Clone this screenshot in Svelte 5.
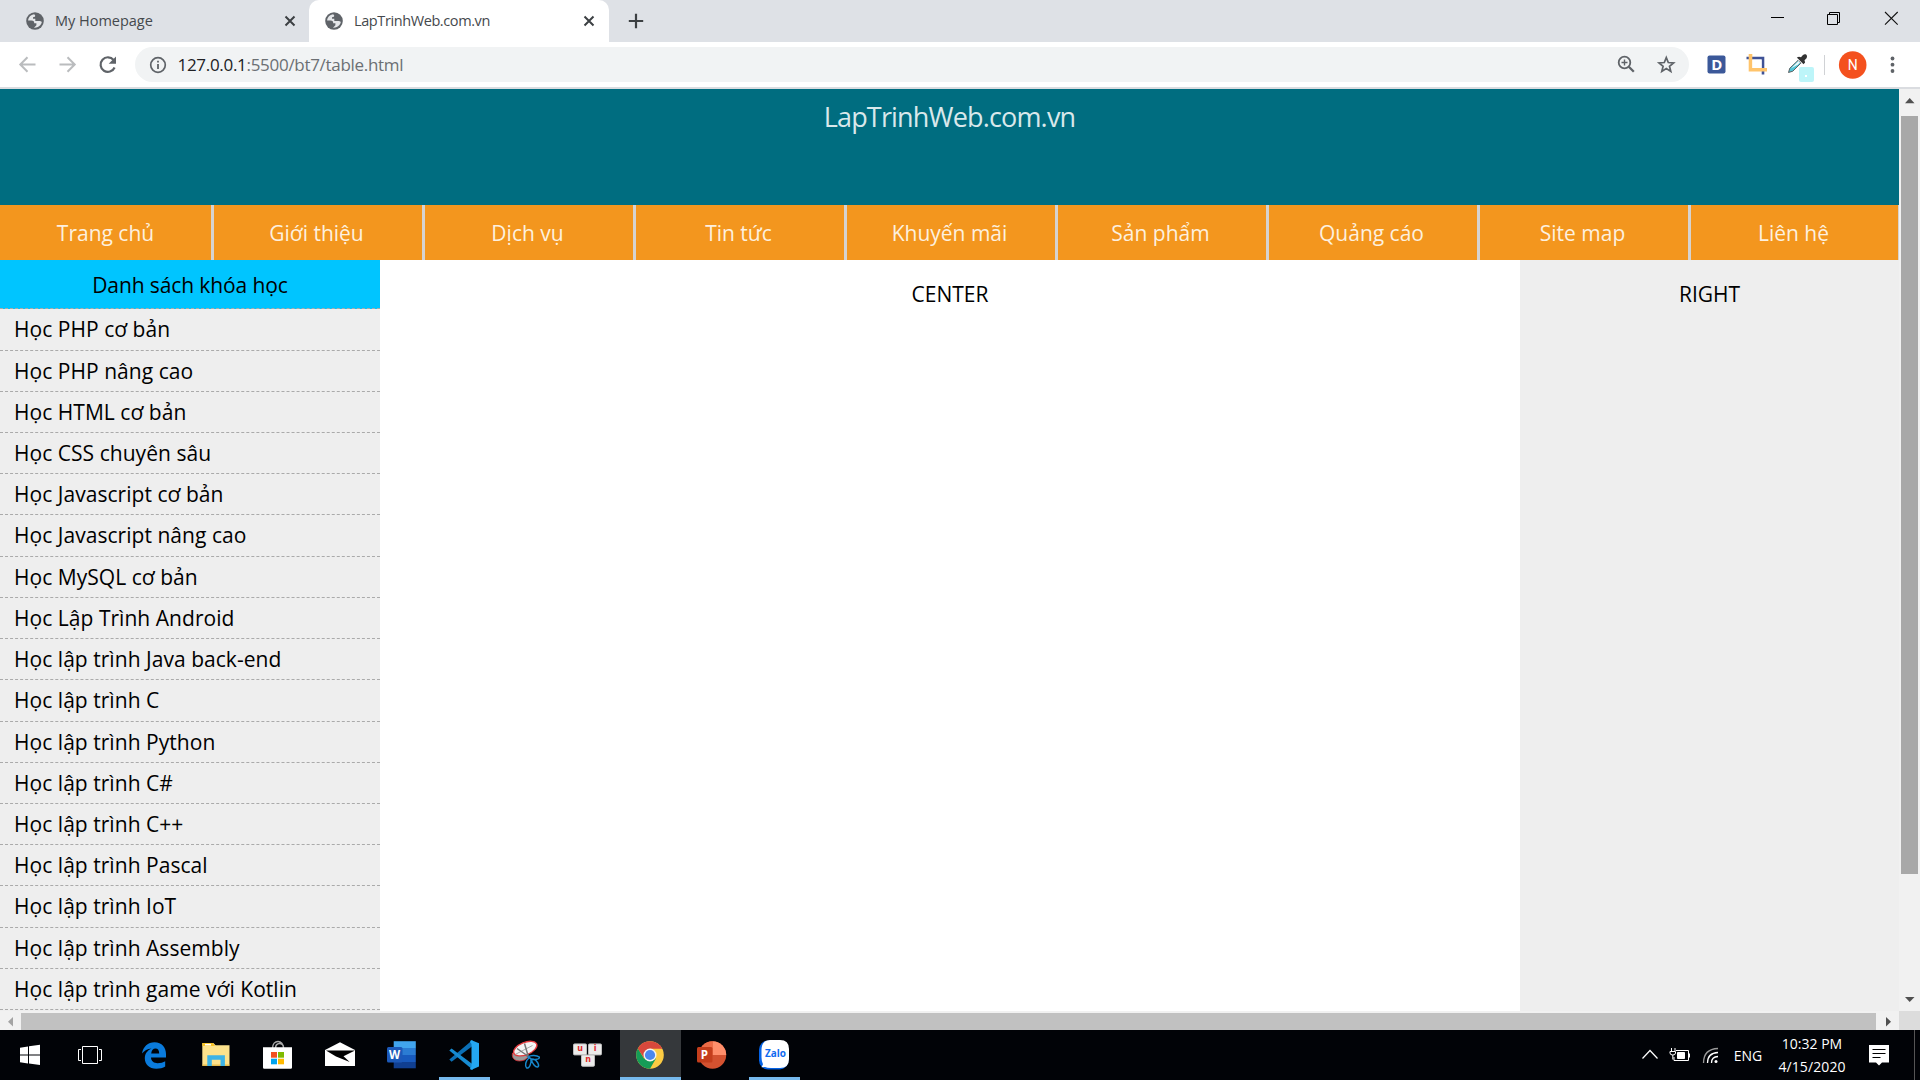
<script>
  const menu = [
    'Trang chủ', 'Giới thiệu', 'Dịch vụ', 'Tin tức', 'Khuyến mãi',
    'Sản phẩm', 'Quảng cáo', 'Site map', 'Liên hệ'
  ];
  const courses = [
    'Học PHP cơ bản', 'Học PHP nâng cao', 'Học HTML cơ bản', 'Học CSS chuyên sâu',
    'Học Javascript cơ bản', 'Học Javascript nâng cao', 'Học MySQL cơ bản',
    'Học Lập Trình Android', 'Học lập trình Java back-end', 'Học lập trình C',
    'Học lập trình Python', 'Học lập trình C#', 'Học lập trình C++',
    'Học lập trình Pascal', 'Học lập trình IoT', 'Học lập trình Assembly',
    'Học lập trình game với Kotlin'
  ];
</script>

{#snippet globe()}
  <svg class="globe" viewBox="0 0 18 18">
    <circle cx="9" cy="9" r="8.8" fill="#5f6368" />
    <path d="M8.2 2.2C5 2.600 2.300 5.200 2.100 8.600L5.500 8.600C7.600 8.600 8.300 9.700 8.200 11.200L10.400 11.200L10.400 13.200L8 15.700C11.500 16.200 15.200 13.700 15.800 10.100C15 8.800 14 8.900 12.500 8.900L9.300 8.900L9.300 6.700L7 6.700L7 5.300C8.800 5.200 9.200 4.500 9.200 3.500Z" fill="#e4e6e9" />
  </svg>
{/snippet}

{#snippet cross()}
  <svg class="cross" viewBox="0 0 12 12"><path d="M1.500 1.500l9 9M10.500 1.500l-9 9" stroke="#3c4043" stroke-width="2" /></svg>
{/snippet}

<div class="screen">
  <header class="tabs">
    <div class="tab first">{@render globe()}<span class="title">My Homepage</span>{@render cross()}</div>
    <div class="tab active">{@render globe()}<span class="title tight">LapTrinhWeb.com.vn</span>{@render cross()}</div>
    <svg class="plus" viewBox="0 0 16 16"><path d="M8 .8v14.400M.8 8h14.400" stroke="#3c4043" stroke-width="2.200" /></svg>
    <div class="winctl">
      <svg width="56" height="42" viewBox="1750 0 56 42"><path d="M1771 17.500h13" stroke="#000" /></svg>
      <svg width="56" height="42" viewBox="1806 0 56 42"><path d="M1827.500 14.500h10v10h-10zM1829.500 14v-1.500h10v10h-1.500" fill="none" stroke="#000" /></svg>
      <svg width="58" height="42" viewBox="1862 0 58 42"><path d="M1885 12l12.700 12.700M1897.700 12l-12.700 12.700" stroke="#111" stroke-width="1.100" /></svg>
    </div>
  </header>

  <div class="toolbar">
    <svg width="135" height="45" viewBox="0 42 135 45" fill="none" stroke-width="2">
      <path d="M35.500 64.500H20.500M27.500 57.300L20.300 64.500L27.500 71.700" stroke="#babcbe" />
      <path d="M59.500 64.500H74.500M67.500 57.300L74.700 64.500L67.500 71.700" stroke="#babcbe" />
      <path d="M113.600 60A7.300 7.300 0 1 0 114.600 67.500" stroke="#5f6368" stroke-width="2.200" />
      <path d="M116 56.500v7.300h-7.300z" fill="#5f6368" />
    </svg>
    <div class="omnibox">
      <svg width="18" height="18" viewBox="0 0 18 18"><circle cx="9" cy="9" r="7.300" fill="none" stroke="#5f6368" stroke-width="1.700" /><path d="M9 8v5M9 4.800v1.800" stroke="#5f6368" stroke-width="1.800" /></svg>
      <span class="url"><b>127.0.0.1</b>:5500/bt7/table.html</span>
      <svg class="omni-icons" width="83" height="35" viewBox="1606 47 83 35" fill="none" stroke="#5f6368">
        <circle cx="1624.500" cy="62.500" r="5.800" stroke-width="1.800" />
        <path d="M1628.800 66.800l5 5" stroke-width="2.300" />
        <path d="M1621.500 62.500h6M1624.500 59.500v6" stroke-width="1.400" />
        <path d="M1666.300 57.600l2 4.900 5.300.4-4.100 3.400 1.300 5.100-4.500-2.800-4.500 2.800 1.300-5.100-4.100-3.400 5.300-.4z" stroke-width="1.700" />
      </svg>
    </div>
    <svg width="231" height="45" viewBox="1689 42 231 45">
      <rect x="1707.500" y="55.500" width="18" height="18" rx="2" fill="#3b5899" />
      <text x="1716.800" y="70" text-anchor="middle" class="d-glyph">D</text>
      <path d="M1746.500 58H1763V74.500" fill="none" stroke="#3f5296" stroke-width="2.600" />
      <path d="M1750.500 54V69.800H1767" fill="none" stroke="#ffc46b" stroke-width="3.600" />
      <path d="M1752.500 60H1761.500v8h-9z" fill="#fff" />
      <path d="M1788.500 72.500l1.300-4.300 8.200-7.800 2.800 2.800-8 8z" fill="#4fc6d8" stroke="#555" stroke-width=".9" />
      <path d="M1791 68.500l7.500-7.500 1.500 1.500-2 2z" fill="#eefafa" />
      <path d="M1796.800 57.500l2.200-.8 2 .6 1.700-2.100c3-2.200 5.500.3 3.800 3.100l-2 2 .6 2.200-1.600 1.700z" fill="#333" />
      <rect x="1799" y="67" width="15" height="15" rx="2" fill="#bdf5f9" />
      <rect x="1805" y="75" width="2" height="2" fill="#fff" />
      <path d="M1824.500 55v20" stroke="#d0d2d5" />
      <circle cx="1852.700" cy="65" r="13.800" fill="#f4511e" />
      <text x="1852.700" y="70.200" text-anchor="middle" class="n-glyph">N</text>
      <g fill="#5f6368"><circle cx="1892.500" cy="58.500" r="1.900" /><circle cx="1892.500" cy="64.700" r="1.900" /><circle cx="1892.500" cy="71" r="1.900" /></g>
    </svg>
  </div>

  <div class="viewport">
    <main class="page">
      <div class="banner">LapTrinhWeb.com.vn</div>
      <nav>
        {#each menu as label}<span>{label}</span>{/each}
      </nav>
      <div class="columns">
        <aside class="left">
          <div class="list-title">Danh sách khóa học</div>
          {#each courses as c}<div class="course">{c}</div>{/each}
        </aside>
        <section class="center">CENTER</section>
        <aside class="right">RIGHT</aside>
      </div>
    </main>
    <div class="vscroll">
      <svg width="21" height="27" viewBox="0 0 21 27"><path d="M6 14.300h9.500L10.700 9z" fill="#505050" /></svg>
      <div class="vthumb"></div>
      <svg class="end" width="21" height="27" viewBox="0 0 21 27"><path d="M6 13h9.500L10.700 18z" fill="#505050" /></svg>
    </div>
  </div>

  <div class="hscroll">
    <svg width="21" height="19" viewBox="0 0 21 19"><path d="M13 6v9.500L8 10.700z" fill="#a3a3a3" /></svg>
    <div class="hthumb"></div>
    <svg width="23" height="19" viewBox="0 0 23 19"><path d="M10 6v9.500L15 10.700z" fill="#505050" /></svg>
    <div class="corner"></div>
  </div>

  <footer class="taskbar">
    <svg width="60" height="50" viewBox="0 0 60 50"><path d="M20 17.700l8-1.200v8H20zM29 16.300l11-1.500v9.700H29zM20 25.500h8v8l-8-1.200zM29 25.500h11V35l-11-1.400z" fill="#fff" /></svg>
    <svg width="63" height="50" viewBox="60 0 63 50"><path d="M82.500 16.500h15v17h-15zM81 19.500h-2.500v11H81M99 19.500h2.500v11H99" fill="none" stroke="#fff" /></svg>
    <svg viewBox="123 0 62 50"><path d="M142 23.600C143.200 16.500 147.900 12.200 154.500 12.200C162 12.200 166 17.500 166 24V27.600H151C151.200 31.600 154.200 33.200 157.500 33.200C160.700 33.200 163.200 32.300 165.200 31.200V36.600C163 38 159.800 38.800 156.300 38.800C149.300 38.800 144.800 34.300 144.800 28.300C144.800 23.700 147.600 20.200 151.600 18.500C147.500 18.800 144.100 20.800 142 23.600ZM151.200 23.400H159.200C159.200 20.300 158 18.400 155.400 18.400C153.200 18.400 151.600 20.200 151.200 23.400Z" fill="#0a7bdc" /></svg>
    <svg viewBox="185 0 62 50">
      <path d="M202.300 13h11l2.300 2.300H229.500V35.500H202.300z" fill="#fce28c" /><path d="M202.300 13h10.700l2 3h-12.700z" fill="#f7c327" /><path d="M205 13.900h6v1.600h-6z" fill="#fff" />
      <path d="M202.300 34.500h27.200v1.500h-27.200z" fill="#e6bd4e" /><path d="M207.300 25.300h17.600V36h-4.400v-6.300h-8.700V36h-4.500z" fill="#3cb3e6" />
    </svg>
    <svg viewBox="247 0 62 50">
      <path d="M272.500 18.500c0-9.500 11-9.500 11 0M275.500 18.500c0-6.500 8-6.500 8-1" fill="none" stroke="#aaa" stroke-width="1.500" />
      <path d="M263 17.200h29V37.500q0 1.300-1.300 1.300h-26.400q-1.300 0-1.300-1.300z" fill="#fff" />
      <path d="M271 22h6v5.700h-6z" fill="#f25022" /><path d="M278 22h6v5.700h-6z" fill="#7fba00" /><path d="M271 28.700h6v5.600h-6z" fill="#00a4ef" /><path d="M278 28.700h6v5.600h-6z" fill="#ffb900" />
    </svg>
    <svg viewBox="309 0 62 50"><path d="M325 20L340 12.300L355 20V36H325z" fill="#fff" /><path d="M326 20.500H355L343.500 26.300L349.700 32L336 26.500z" fill="#000" /></svg>
    <svg viewBox="371 0 62 50">
      <path d="M393.700 11.200h22.100v7h-22.100z" fill="#41a5ee" /><path d="M393.700 18h22.100v7h-22.100z" fill="#2b7cd3" /><path d="M393.700 25h22.100v7h-22.100z" fill="#185abd" /><path d="M393.700 32h22.100v6.300h-22.100z" fill="#103f91" />
      <rect x="387" y="17" width="15.500" height="15.500" rx="1.500" fill="#1c59b9" /><text x="394.600" y="28.800" class="office" text-anchor="middle">W</text>
    </svg>
    <svg viewBox="433 0 62 50">
      <path d="M449.300 29.500l2.300 2.200L472.500 16v-6z" fill="#0b6fb5" />
      <path d="M449.300 20.500l2.300-2L473 34.500V40z" fill="#168bd2" /><path d="M471 10l8 3.200V36.500L471 40l-1-1.500 1.500-2V14l-1.500-2z" fill="#24a7f2" />
      <path class="under" d="M439 47h51v3h-51z" />
    </svg>
    <svg viewBox="495 0 62 50">
      <path d="M512.500 23c-1.500 7 5 9.500 12 7l4-3-9-5z" fill="#999" stroke="#d52b30" stroke-width=".8" />
      <ellipse cx="525.300" cy="18.600" rx="12.300" ry="6.200" transform="rotate(-22 525.300 18.600)" fill="#f4f4f4" stroke="#e43b3e" stroke-width="1.300" />
      <path d="M515.500 24.300L532.500 15.500" stroke="#aaa" /><path d="M524.500 13.500L528.300 26.500M517 18.500L528.500 26.500" stroke="#777" stroke-width="1.500" />
      <g fill="none" stroke="#1687cc" stroke-width="1.500"><path d="M528 27c3-2.500 9-1.800 11.300 0 .6 2.500-4.300 3.200-8.300 1.700zM529 28c-3.500 2.500-4.200 8-2.500 9.800 2.500 1.700 5.500-4.800 4.300-9.300M531 28.500c1 5 4.800 9.500 7 8.300 1.700-1.500-1-7-5-7.800" /></g>
    </svg>
    <svg viewBox="557 0 62 50">
      <g fill="#ebebeb" stroke="#bbb"><rect x="573.500" y="13.900" width="13" height="11" rx="1" /><rect x="588.500" y="13.900" width="13" height="11" rx="1" /><rect x="581.500" y="25" width="13" height="11.300" rx="1" /></g>
      <g class="key" text-anchor="middle"><text x="580.200" y="20.800">u</text><text x="595" y="20.800">i</text><text x="588" y="32.200">n</text></g>
    </svg>
    <svg viewBox="619 0 62 50">
      <path d="M620 0h61v50h-61z" fill="#35383b" />
      <circle cx="650" cy="25" r="13.800" fill="#fbcb43" />
      <path d="M637.900 18.300A13.800 13.800 0 0 0 650 38.800L656 28.500L644 28.500z" fill="#159c57" />
      <path d="M637.800 18.500A13.800 13.800 0 0 1 662.300 18.700H650L644 28z" fill="#d8483c" />
      <circle cx="650" cy="25" r="6.500" fill="#f3f3f3" /><circle cx="650" cy="25" r="5.100" fill="#4a87ee" />
      <path class="under" d="M620 47h61v3h-61z" />
    </svg>
    <svg viewBox="681 0 62 50">
      <circle cx="712.500" cy="25" r="13.700" fill="#d35230" /><path d="M712.500 25V11.300A13.700 13.700 0 0 1 726.200 25z" fill="#ff8f6b" /><path d="M712.500 25V11.300A13.700 13.700 0 0 0 698.800 25z" fill="#ed6c47" />
      <rect x="697" y="17" width="15.500" height="15.500" rx="1.500" fill="#c43e1c" /><text x="704.300" y="28.900" class="office" text-anchor="middle">P</text>
    </svg>
    <svg viewBox="743 0 62 50">
      <rect x="759" y="10.500" width="29.500" height="29" rx="9" fill="#0563e6" /><path d="M770 10h10q9 0 9 9v10q0 9-9 9H771q-4 0-6-1l-3.500.3 1.500-3q-1.500-3-1.500-7v-7q0-10 8.500-10.300z" fill="#fff" />
      <text x="765" y="27" class="zalo" textLength="21" lengthAdjust="spacingAndGlyphs">Zalo</text>
      <path class="under" d="M749 47h51v3h-51z" />
    </svg>
    <div class="tray">
      <svg width="102" height="50" viewBox="1626 0 102 50" fill="none" stroke="#fff">
        <path d="M1642.500 28.500l7.500-8 7.500 8" stroke-width="1.200" />
        <path d="M1676 20.500h12.500v10h-14.500v-3.500M1689.500 23.500v4" /><path d="M1677.500 22.500h7v6h-7z" fill="#fff" /><path d="M1671.500 18v3M1675 18v3M1670 21.500h5.500v1.500q0 2-2.700 2-2.800 0-2.800-2zM1672.800 25v4.500" />
        <path d="M1703.500 33q0-14 14.500-14.500" stroke="#999" stroke-width="1.300" /><path d="M1707.500 33q0-10 10.500-10.500M1711.500 33q0-6.300 6.500-6.500" stroke-width="1.300" /><circle cx="1716" cy="31.500" r="1.500" fill="#fff" stroke="none" />
      </svg>
      <span class="lang">ENG</span>
      <div class="clock"><span class="time">10:32 PM</span><span class="date">4/15/2020</span></div>
      <svg width="64" height="50" viewBox="1856 0 64 50"><path d="M1869 15h20v17.500h-7l-3 3-3-3h-7z" fill="#fff" /><path d="M1872.500 19.500h13M1872.500 23.500h13M1872.500 27.500h8" stroke="#000" /><path d="M1914.500 0v50" stroke="#555" /></svg>
    </div>
  </footer>
</div>

<style>
  :global(body) { margin: 0; overflow: hidden; }
  .screen { width: 1920px; height: 1080px; display: flex; flex-direction: column; font-family: "Open Sans", "Noto Sans", sans-serif; color: #000; overflow: hidden; }
  svg { display: block; flex: none; }
  .tabs { height: 42px; flex: none; background: #dee1e6; display: flex; align-items: center; }
  .tab { box-sizing: border-box; height: 42px; display: flex; align-items: center; color: #45494d; font-size: 14.500px; }
  .first { width: 309px; padding: 0 13px 0 26px; }
  .active { width: 300px; background: #fff; border-radius: 10px 10px 0 0; padding: 0 14px 0 16px; }
  .globe { width: 18px; height: 18px; }
  .cross { width: 12px; height: 12px; margin-left: auto; }
  .title { margin-left: 11px; letter-spacing: -0.02px; line-height: 20px; }
  .tight { letter-spacing: -0.4px; }
  .plus { width: 16px; height: 16px; margin-left: 19px; }
  .winctl { display: flex; margin-left: auto; }
  .toolbar { box-sizing: border-box; height: 47px; flex: none; display: flex; background: #fff; border-bottom: 2px solid #dadce0; }
  .omnibox { width: 1554px; height: 35px; margin-top: 5px; border-radius: 18px; background: #f1f3f4; display: flex; align-items: center; padding-left: 13.500px; box-sizing: border-box; }
  .url { margin-left: 11px; font-size: 17px; color: #6b6f73; letter-spacing: -0.3px; }
  .url b { font-weight: 400; color: #202124; }
  .omni-icons { margin-left: auto; }
  .d-glyph { font: 700 15px "Open Sans", sans-serif; fill: #fff; }
  .n-glyph { font: 400 14px Roboto, sans-serif; fill: #fff; }
  .viewport { height: 922px; flex: none; display: flex; }
  .page { width: 1899px; display: flex; flex-direction: column; }
  .banner { height: 116px; flex: none; background: #006d80; color: #d9e8eb; font-size: 27px; letter-spacing: -0.83px; line-height: 56px; text-align: center; }
  nav { height: 55px; flex: none; display: grid; grid-template-columns: repeat(9, 211px); background: #f3961e; color: #fdf0df; font-size: 21px; line-height: 56px; text-align: center; }
  nav span + span { box-shadow: inset 3px 0 #d6d3d0; }
  nav span:last-child { box-shadow: inset 3px 0 #d6d3d0, inset -1px 0 #d6d3d0; }
  .columns { flex: 1; display: flex; min-height: 0; font-size: 21px; }
  .left { width: 380px; background: #eee; }
  .list-title { height: 48.400px; line-height: 51px; letter-spacing: -0.1px; background: #00c5ff; border-bottom: 1px dashed #aaa; text-align: center; }
  .course { height: 40.230px; line-height: 41px; padding-left: 14px; letter-spacing: 0.04px; border-bottom: 1px dashed #aaa; }
  .center { width: 1140px; background: #fff; text-align: center; line-height: 68px; }
  .right { width: 379px; background: #eee; text-align: center; line-height: 68px; }
  .vscroll { width: 21px; background: #f1f1f1; display: flex; flex-direction: column; }
  .vthumb { width: 17px; height: 758px; margin-left: 2px; background: #a8a8a8; }
  .end { margin-top: auto; }
  .hscroll { height: 19px; flex: none; background: #f1f1f1; display: flex; }
  .hthumb { width: 1855px; height: 17px; margin-top: 2px; background: #c1c1c1; }
  .corner { width: 21px; background: #dcdcdc; }
  .taskbar { height: 50px; flex: none; background: #010307; display: flex; }
  .taskbar > svg:nth-of-type(n + 3) { width: 62px; height: 50px; }
  .under { fill: #76b9ed; }
  .office { font: 700 11.500px "Open Sans", sans-serif; fill: #fff; }
  .key { font: 700 8px "DejaVu Sans", sans-serif; fill: #e02b2b; }
  .zalo { font: 700 10px "Open Sans", sans-serif; fill: #0f6bf0; }
  .tray { margin-left: auto; display: flex; align-items: center; color: #fff; font-size: 14px; }
  .lang { width: 40px; text-align: center; }
  .clock { width: 88px; height: 50px; display: flex; flex-direction: column; text-align: center; line-height: 23px; padding-top: 2px; box-sizing: border-box; }
  .clock span { white-space: nowrap; }
  .date { letter-spacing: 0.1px; }
</style>
